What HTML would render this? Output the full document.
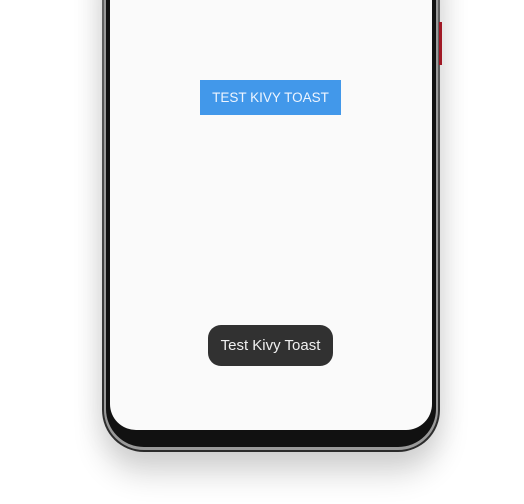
<!DOCTYPE html>
<html><head><style>
html,body{margin:0;padding:0;width:524px;height:504px;overflow:hidden;background:#fff;font-family:"Liberation Sans",Roboto,sans-serif}
.frame{position:absolute;left:102px;top:-50px;width:338px;height:502px;border-radius:0 0 42px 42px;background:linear-gradient(#6a6a6a,#2a2a2a);box-sizing:border-box;box-shadow:0 22px 30px rgba(0,0,0,0.16),0 0 30px rgba(0,0,0,0.08)}
.frame2{position:absolute;left:104px;top:-50px;width:334px;height:500px;border-radius:0 0 40px 40px;background:#9a9a9a}
.frame3{position:absolute;left:106px;top:-50px;width:330px;height:497px;border-radius:0 0 38px 38px;background:#111}
.screen{position:absolute;left:110px;top:0;width:322px;height:430px;background:#fafafa;border-radius:0 0 26px 26px}
.red{position:absolute;left:439px;top:22px;width:3px;height:43px;background:#a01825}
.btn{position:absolute;left:200px;top:80px;width:141px;height:35px;background:#4298ea;color:#eef5ff;font-size:13.5px;line-height:35px;text-align:center}
.toast{position:absolute;left:208px;top:325px;width:125px;height:41px;background:#313131;border-radius:13px;color:#f0f0f0;font-size:15px;line-height:41px;text-align:center}
</style></head><body>
<div class="frame"></div>
<div class="frame2"></div>
<div class="frame3"></div>
<div class="red"></div>
<div class="screen"></div>
<div class="btn">TEST KIVY TOAST</div>
<div class="toast">Test Kivy Toast</div>
</body></html>
